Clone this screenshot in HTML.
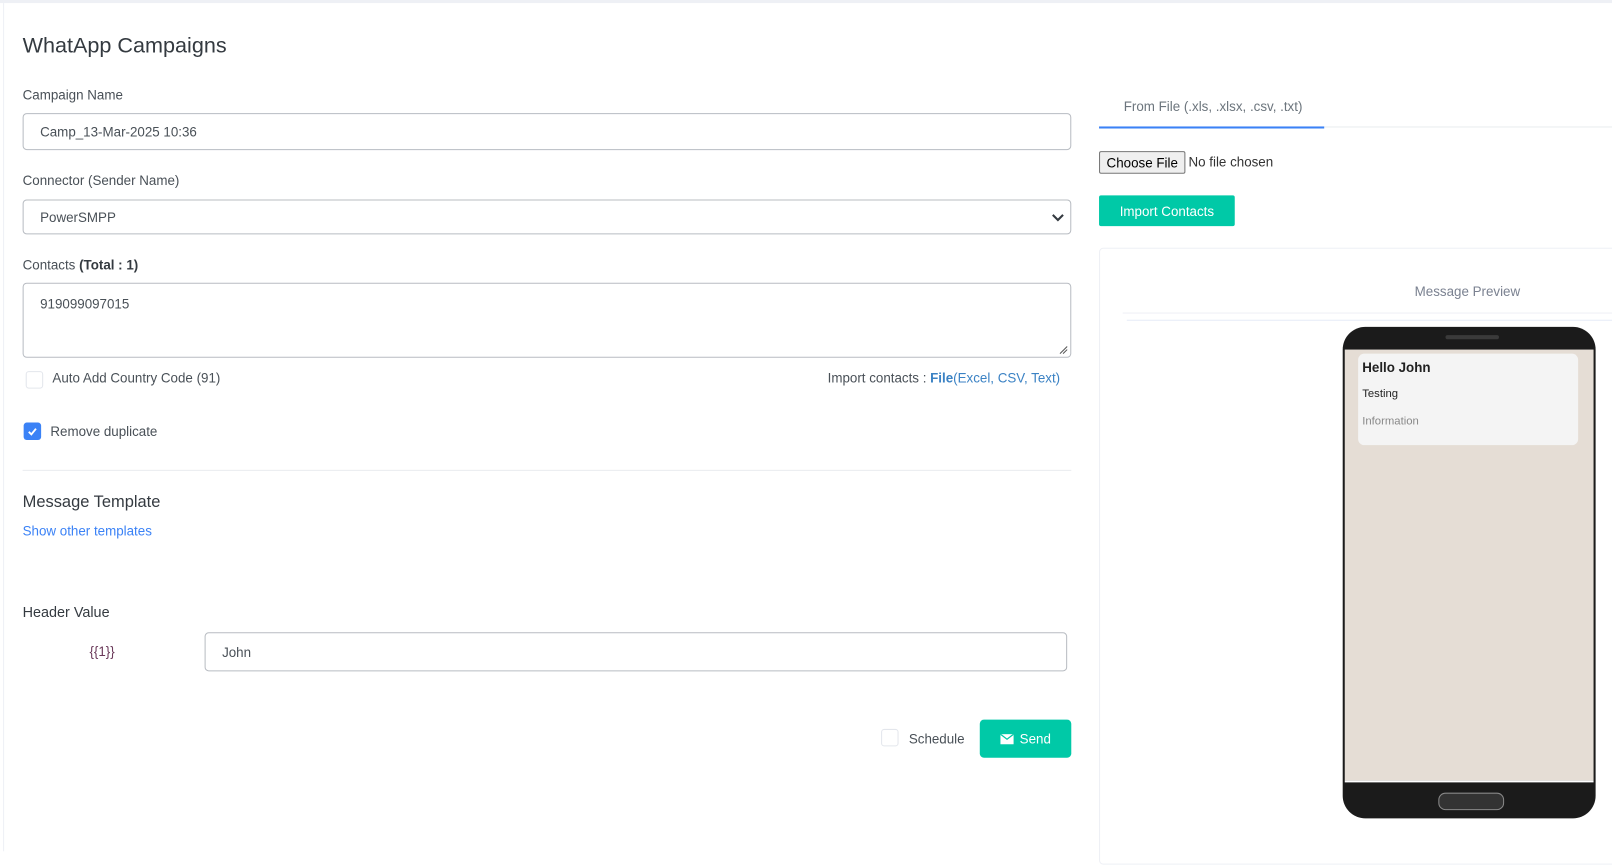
<!DOCTYPE html>
<html><head><meta charset="utf-8"><style>
*{box-sizing:border-box;margin:0;padding:0}
body{width:1612px;height:828px;background:#fff;font-family:"Liberation Sans",sans-serif;color:#495057;overflow:hidden;font-size:13px}
#w{position:relative;width:1568px;height:806px;transform:scale(1.0281);transform-origin:0 0}
.a{position:absolute}
.inp{position:absolute;border:1px solid #b8bcc2;border-radius:4px;background:#fff;padding-left:16px;display:flex;align-items:center;font-size:13px;color:#495057}
.lbl{position:absolute;font-size:13px;color:#495057}
.cb{position:absolute;width:17px;height:17px;border:1px solid #e3e6ec;border-radius:3px;background:#fff}
</style></head><body><div id="w">
<div class="a" style="left:0;top:0;width:1568px;height:3px;background:#eef0f5"></div>
<div class="a" style="left:3px;top:3px;width:1px;height:825px;background:#eef0f5"></div>
<div class="a" style="left:22px;top:33px;font-size:21px;color:#343a40">WhatApp Campaigns</div>

<div class="lbl" style="left:22px;top:85px">Campaign Name</div>
<div class="inp" style="left:22px;top:110px;width:1020px;height:36px">Camp_13-Mar-2025 10:36</div>
<div class="lbl" style="left:22px;top:168px">Connector (Sender Name)</div>
<div class="inp" style="left:22px;top:194px;width:1020px;height:34px">PowerSMPP
<svg class="a" style="right:6px;top:12px" width="12" height="9" viewBox="0 0 12 9"><path d="M1 2l5 5 5-5" stroke="#343a40" stroke-width="2" fill="none"/></svg></div>
<div class="lbl" style="left:22px;top:250px">Contacts <b style="color:#343a40">(Total : 1)</b></div>
<div class="inp" style="left:22px;top:275px;width:1020px;height:73px;align-items:flex-start;padding-top:12px">919099097015
<svg class="a" style="right:2px;bottom:2px" width="9" height="9"><path d="M1 8L8 1M4 8L8 4" stroke="#555" stroke-width="1"/></svg></div>
<div class="cb" style="left:25px;top:361px"></div>
<div class="lbl" style="left:51px;top:360px">Auto Add Country Code (91)</div>
<div class="lbl" style="left:805px;top:360px;color:#495057">Import contacts : <b style="color:#3b82c4">File</b><span style="color:#3b82c4">(Excel, CSV, Text)</span></div>
<div class="a" style="left:23px;top:411px;width:17px;height:17px;border-radius:3px;background:#3b82f6"><svg width="17" height="17"><path d="M5 9l2.5 2.5L12 6" stroke="#fff" stroke-width="1.8" fill="none"/></svg></div>
<div class="lbl" style="left:49px;top:412px">Remove duplicate</div>
<div class="a" style="left:22px;top:457px;width:1020px;height:1px;background:#e9ecef"></div>
<div class="a" style="left:22px;top:480px;font-size:16px;color:#343a40">Message Template</div>
<div class="lbl" style="left:22px;top:509px;color:#3b82f6">Show other templates</div>
<div class="a" style="left:22px;top:587px;font-size:14px;color:#343a40">Header Value</div>
<div class="lbl" style="left:87px;top:626px;color:#6b3a5a">{{1}}</div>
<div class="inp" style="left:199px;top:615px;width:839px;height:38px">John</div>
<div class="cb" style="left:857px;top:709px"></div>
<div class="lbl" style="left:884px;top:711px">Schedule</div>
<div class="a" style="left:953px;top:700px;width:89px;height:37px;background:#00c9a7;border-radius:4px;color:#fff;font-size:13px;display:flex;align-items:center;justify-content:center;gap:6px">
<svg width="13" height="10"><rect width="13" height="10" fill="#fff"/><path d="M0 0l6.5 5L13 0" stroke="#00c9a7" stroke-width="1.2" fill="none"/></svg>Send</div>

<div class="lbl" style="left:1093px;top:96px;color:#6c757d">From File (.xls, .xlsx, .csv, .txt)</div>
<div class="a" style="left:1069px;top:123px;width:543px;height:1px;background:#e9ecef"></div>
<div class="a" style="left:1069px;top:123px;width:219px;height:2px;background:#3b82f6"></div>
<div class="a" style="left:1069px;top:147px;width:84px;height:22px;border:1px solid #767676;border-radius:2px;background:#efefef;font-size:13px;color:#000;display:flex;align-items:center;justify-content:center">Choose File</div>
<div class="lbl" style="left:1156px;top:150px;color:#333">No file chosen</div>
<div class="a" style="left:1069px;top:190px;width:132px;height:30px;background:#00c9a7;border-radius:2px;color:#fff;font-size:13px;display:flex;align-items:center;justify-content:center">Import Contacts</div>
<div class="a" style="left:1069px;top:241px;width:560px;height:600px;border:1px solid #eef0f5;border-radius:4px"></div>
<div class="lbl" style="left:1376px;top:276px;color:#7a8190">Message Preview</div>
<div class="a" style="left:1092px;top:304px;width:520px;height:1px;background:#eef0f5"></div>
<div class="a" style="left:1096px;top:311px;width:516px;height:1px;background:#e6ecf7"></div>

<div class="a" style="left:1306px;top:318px;width:246px;height:478px;background:#1b1b1b;border-radius:22px"></div>
<div class="a" style="left:1406px;top:326px;width:52px;height:4px;background:#3a3a3a;border-radius:2px"></div>
<div class="a" style="left:1308px;top:340px;width:242px;height:419px;background:#e5ddd5"></div>
<div class="a" style="left:1308px;top:759px;width:242px;height:2px;background:#fff"></div>
<div class="a" style="left:1399px;top:771px;width:64px;height:17px;background:#333;border:1px solid #888;border-radius:7px"></div>
<div class="a" style="left:1321px;top:344px;width:214px;height:89px;background:#f4f4f4;border-radius:6px"></div>
<div class="a" style="left:1325px;top:350px;font-size:13px;font-weight:bold;color:#222">Hello John</div>
<div class="a" style="left:1325px;top:377px;font-size:11px;color:#222">Testing</div>
<div class="a" style="left:1325px;top:404px;font-size:11px;color:#888">Information</div>
</div></body></html>
